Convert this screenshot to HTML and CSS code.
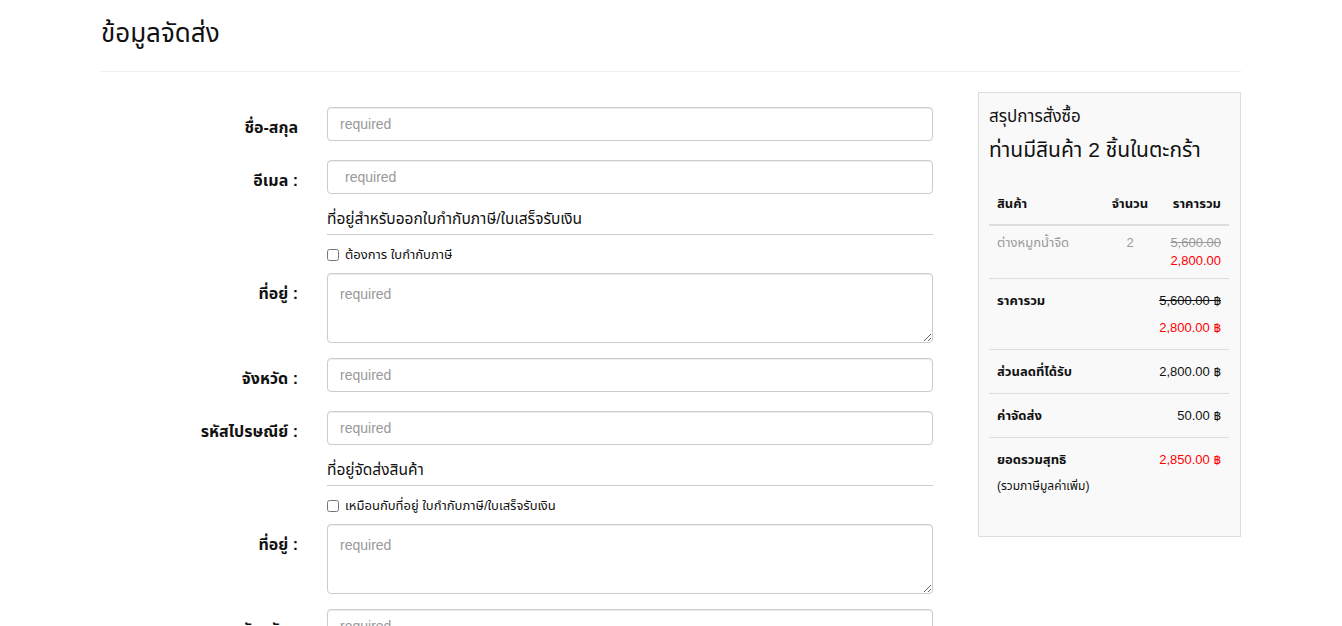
FILE: index.html
```html
<!DOCTYPE html>
<html lang="th">
<head>
    <meta charset="UTF-8">
    <meta name="viewport" content="width=device-width, initial-scale=1.0">
    <title>ข้อมูลจัดส่ง</title>
    <link rel="stylesheet" href="styles.css">
</head>
<body>
    <div class="container">
        <h1 class="page-header">ข้อมูลจัดส่ง</h1>

        <div class="main">
            <form class="checkout-form">
                <div class="form-row">
                    <label class="control-label" for="fullname">ชื่อ-สกุล</label>
                    <input type="text" id="fullname" class="form-control" placeholder="required">
                </div>
                <div class="form-row">
                    <label class="control-label" for="email">อีเมล :</label>
                    <input type="email" id="email" class="form-control indent" placeholder="required">
                </div>

                <div class="form-row section-row">
                    <div class="spacer"></div>
                    <div class="section">
                        <div class="section-title">ที่อยู่สำหรับออกใบกำกับภาษี/ใบเสร็จรับเงิน</div>
                        <label class="check"><input type="checkbox"> ต้องการ ใบกำกับภาษี</label>
                    </div>
                </div>

                <div class="form-row area">
                    <label class="control-label" for="tax-address">ที่อยู่ :</label>
                    <textarea id="tax-address" class="form-control" placeholder="required"></textarea>
                </div>
                <div class="form-row">
                    <label class="control-label" for="tax-province">จังหวัด :</label>
                    <input type="text" id="tax-province" class="form-control" placeholder="required">
                </div>
                <div class="form-row">
                    <label class="control-label" for="tax-zip">รหัสไปรษณีย์ :</label>
                    <input type="text" id="tax-zip" class="form-control" placeholder="required">
                </div>

                <div class="form-row section-row">
                    <div class="spacer"></div>
                    <div class="section">
                        <div class="section-title">ที่อยู่จัดส่งสินค้า</div>
                        <label class="check"><input type="checkbox"> เหมือนกับที่อยู่ ใบกำกับภาษี/ใบเสร็จรับเงิน</label>
                    </div>
                </div>

                <div class="form-row area">
                    <label class="control-label" for="ship-address">ที่อยู่ :</label>
                    <textarea id="ship-address" class="form-control" placeholder="required"></textarea>
                </div>
                <div class="form-row">
                    <label class="control-label" for="ship-province">จังหวัด :</label>
                    <input type="text" id="ship-province" class="form-control" placeholder="required">
                </div>
            </form>

            <aside class="summary">
                <div class="summary-title">สรุปการสั่งซื้อ</div>
                <div class="summary-count">ท่านมีสินค้า 2 ชิ้นในตะกร้า</div>

                <table class="cart-table">
                    <thead>
                        <tr>
                            <th>สินค้า</th>
                            <th class="qty">จำนวน</th>
                            <th class="price">ราคารวม</th>
                        </tr>
                    </thead>
                    <tbody>
                        <tr>
                            <td class="muted">ต่างหมูกน้ำจืด</td>
                            <td class="qty muted">2</td>
                            <td class="price">
                                <div class="muted strike">5,600.00</div>
                                <div class="red">2,800.00</div>
                            </td>
                        </tr>
                    </tbody>
                </table>

                <table class="total-table">
                    <tr>
                        <th>ราคารวม</th>
                        <td>
                            <div class="strike">5,600.00 ฿</div>
                            <div class="red">2,800.00 ฿</div>
                        </td>
                    </tr>
                    <tr>
                        <th>ส่วนลดที่ได้รับ</th>
                        <td>2,800.00 ฿</td>
                    </tr>
                    <tr>
                        <th>ค่าจัดส่ง</th>
                        <td>50.00 ฿</td>
                    </tr>
                    <tr>
                        <th>
                            ยอดรวมสุทธิ
                            <div class="note">(รวมภาษีมูลค่าเพิ่ม)</div>
                        </th>
                        <td class="red">2,850.00 ฿</td>
                    </tr>
                </table>
            </aside>
        </div>
    </div>
</body>
</html>
```

FILE: styles.css
```css
:root {
    --text-color: #111;
    --muted-color: #999;
    --border-color: #ccc;
    --line-color: #ddd;
    --red: #ff0000;
}

* {
    box-sizing: border-box;
    margin: 0;
    padding: 0;
}

body {
    font-family: 'Liberation Sans', 'Noto Sans Thai', 'Noto Sans', 'DejaVu Sans', sans-serif;
    font-size: 14px;
    color: var(--text-color);
    background: #fff;
}

.container {
    width: 1170px;
    margin: 0 auto;
    padding: 0 15px;
}

.page-header {
    font-size: 26px;
    font-weight: 400;
    line-height: 32px;
    padding: 17px 0 22px;
    border-bottom: 1px solid #eee;
}

.main {
    display: flex;
    align-items: flex-start;
    margin-top: 20px;
}

/* form */

.checkout-form {
    flex: 0 0 847px;
    padding: 15px 15px 0 0;
}

.form-row {
    display: grid;
    grid-template-columns: 197px 606px;
    column-gap: 29px;
    margin-bottom: 19px;
}

.form-row.area {
    margin-bottom: 15px;
}

.form-row.section-row {
    margin-bottom: 0;
}

.control-label {
    text-align: right;
    font-weight: 700;
    font-size: 16px;
    line-height: 20px;
    padding-top: 11px;
    white-space: nowrap;
}

.form-control {
    display: block;
    width: 100%;
    height: 34px;
    padding: 6px 12px;
    font-family: 'Liberation Sans', sans-serif;
    font-size: 14px;
    color: #555;
    border: 1px solid var(--border-color);
    border-radius: 4px;
    box-shadow: inset 0 1px 1px rgba(0, 0, 0, 0.075);
}

.form-control::placeholder {
    color: var(--muted-color);
}

.form-control.indent {
    padding-left: 17px;
}

textarea.form-control {
    height: 70px;
    padding-top: 12px;
    resize: vertical;
}

.section-title {
    font-size: 15.5px;
    line-height: 12px;
    padding-bottom: 9px;
    border-bottom: 1px solid var(--border-color);
}

.check {
    display: flex;
    align-items: center;
    gap: 6px;
    font-size: 13px;
    line-height: 18px;
    margin: 11px 0 9px;
}

.check input {
    width: 12px;
    height: 12px;
    margin: 0;
}

/* summary */

.summary {
    flex: 0 0 263px;
    margin-left: 30px;
    background: #f9f9f9;
    border: 1px solid var(--line-color);
    padding: 14px 11px 28px 10px;
}

.summary-title {
    font-size: 17px;
    line-height: 20px;
}

.summary-count {
    font-size: 21px;
    line-height: 28px;
    margin-top: 9px;
}

table {
    width: 100%;
    border-collapse: collapse;
    font-size: 13px;
}

.cart-table {
    margin-top: 26px;
}

.cart-table th,
.cart-table td {
    padding: 8px;
    line-height: 18px;
    text-align: left;
    vertical-align: top;
}

.cart-table th {
    font-weight: 700;
    padding-top: 5px;
    padding-bottom: 11px;
    border-bottom: 2px solid var(--line-color);
}

.cart-table .qty {
    width: 54px;
    padding-left: 4px;
    padding-right: 4px;
    text-align: center;
}

.cart-table .price {
    width: 72px;
    text-align: right;
}

.total-table th,
.total-table td {
    padding: 8px;
    line-height: 27px;
    border-top: 1px solid var(--line-color);
    vertical-align: top;
}

.total-table th {
    text-align: left;
    font-weight: 700;
}

.total-table td {
    text-align: right;
}

.note {
    font-weight: 400;
    font-size: 12px;
}

.muted {
    color: var(--muted-color);
}

.red {
    color: var(--red);
}

.strike {
    text-decoration: line-through;
}
```
